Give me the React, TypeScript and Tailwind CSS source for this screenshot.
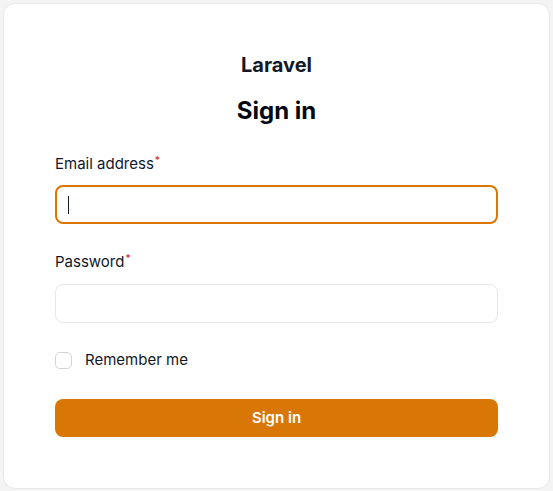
import React from "react";

export default function App() {
  return (
    <div className="min-h-[491px] w-[553px] bg-[#f4f4f5] p-[3px] pb-[2px]" style={{ fontFamily: "Inter, 'Noto Sans', sans-serif" }}>
      <div className="flex h-[486px] flex-col rounded-xl border border-[#e5e7eb] bg-white px-[51px] pt-[47px]">
        <div className="text-center text-[20px] font-bold leading-[28px] text-[#111827]">Laravel</div>
        <h1 className="mt-[16px] text-center text-[24px] font-bold leading-[32px] text-[#030712]">Sign in</h1>
        <form className="mt-[27px] flex flex-col">
          <label className="text-[15px] font-normal leading-[20px] text-[#111827]">
            Email address<sup className="ml-[1px] text-[10px] font-medium text-[#dc2626]">*</sup>
          </label>
          <div className="mt-[11px] flex h-[39px] items-center rounded-lg border-2 border-[#d97706] bg-white px-[11px]">
            <span className="h-[18px] w-[1px] bg-[#111827]" />
          </div>
          <label className="mt-[28px] text-[15px] font-normal leading-[20px] text-[#111827]">
            Password<sup className="ml-[1px] text-[10px] font-medium text-[#dc2626]">*</sup>
          </label>
          <div className="mt-[12px] h-[39px] rounded-lg border border-[#e5e7eb] bg-white" />
          <div className="mt-[27px] flex items-center gap-[13px]">
            <span className="h-[17px] w-[17px] rounded-[5px] border border-[#d4d4d8] bg-white" />
            <span className="text-[15px] font-normal leading-[20px] text-[#111827]">Remember me</span>
          </div>
          <button type="button" className="mt-[29px] h-[38px] rounded-lg bg-[#d97706] text-[15px] font-semibold text-white">
            Sign in
          </button>
        </form>
      </div>
    </div>
  );
}
